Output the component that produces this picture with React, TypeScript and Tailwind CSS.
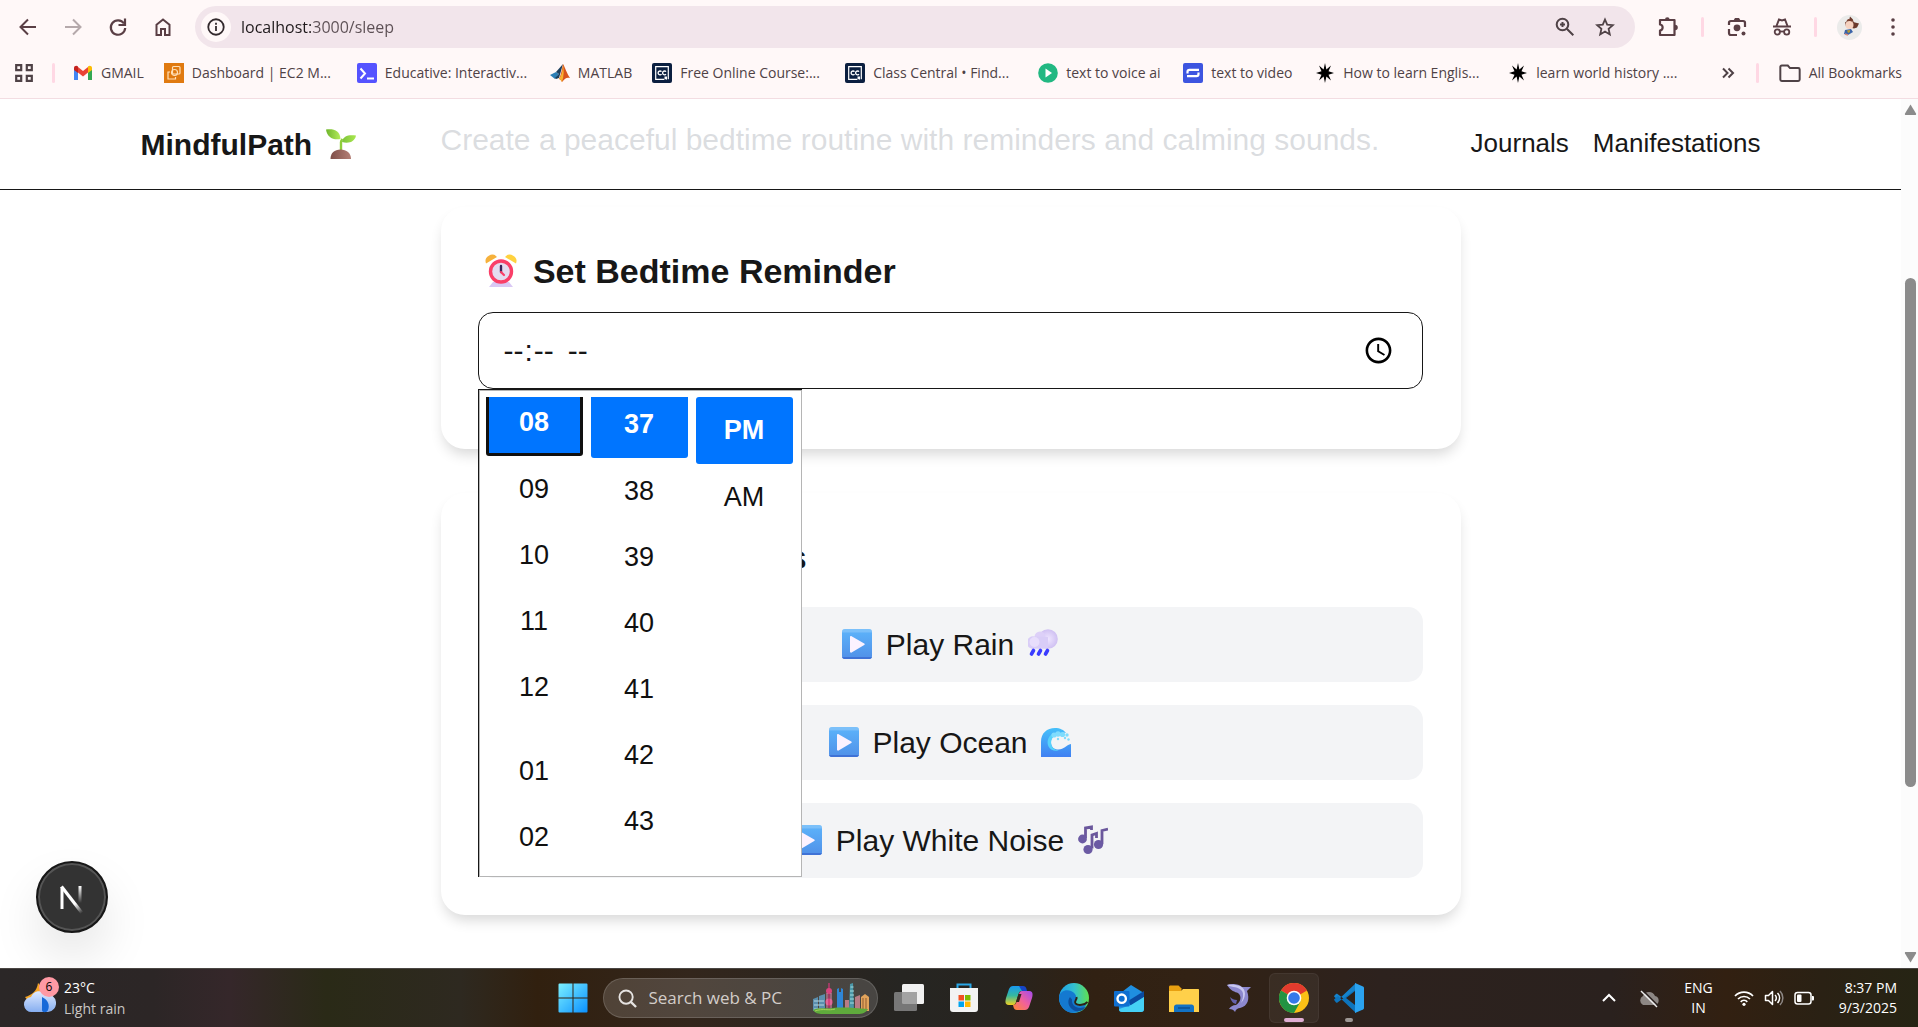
import type { ReactNode } from "react";

const ui = "font-['Open_Sans','Noto_Sans',sans-serif]";

function Svg({ size = 20, box = 20, className, children }: { size?: number; box?: number; className?: string; children: ReactNode }) {
  return (
    <svg
      width={size}
      height={size}
      viewBox={`0 0 ${box} ${box}`}
      fill="none"
      className={className}
      aria-hidden="true"
    >
      {children}
    </svg>
  );
}

/* ---------- emoji ---------- */

function Emoji({ children }: { children: ReactNode }) {
  return (
    <span className="inline-flex w-[41px] justify-center align-[-4px]">
      <Svg size={30} box={30}>{children}</Svg>
    </span>
  );
}

const Sprout = () => (
  <Emoji>
    <path d="M15 22V13c0-1 .5-2 1.500-3" stroke="#8fce3a" strokeWidth="2.400" />
    <path d="M0 0.500c8-1 14 1 14.500 9.500C7 11.500 1 8 0 0.500z" fill="url(#leafA)" />
    <path d="M30 6.500c-7-1-13 0-14 6.500 7 2 13-0.500 14-6.500z" fill="url(#leafB)" />
    <path d="M4.500 30c0-6 4-9.500 10-9.500S25 24 25 30z" fill="url(#soil)" />
    <defs>
      <linearGradient id="leafA"><stop stopColor="#6fb52c" /><stop offset="1" stopColor="#b4ec5a" /></linearGradient>
      <linearGradient id="leafB"><stop stopColor="#7dc23a" /><stop offset="1" stopColor="#a9e84e" /></linearGradient>
      <linearGradient id="soil"><stop stopColor="#7f4f49" /><stop offset="1" stopColor="#b47f76" /></linearGradient>
    </defs>
  </Emoji>
);

const AlarmClock = () => (
  <span className="inline-flex w-[46px] justify-center align-[-4px]">
    <Svg size={34} box={34}>
      <path d="M5 34l4-5h16l4 5z" fill="#d9c8f4" />
      <path d="M2 10.500a6.500 6.500 0 0 1 11-6.500z" fill="#f6b13c" />
      <path d="M32 10.500a6.500 6.500 0 0 0-11-6.500z" fill="#ffd23f" />
      <circle cx="17" cy="18.500" r="10.500" fill="#e4dcf0" stroke="#fa3f68" strokeWidth="3.400" />
      <path d="M17 13v6" stroke="#36245a" strokeWidth="2.400" strokeLinecap="round" />
      <path d="M17 19l3 3" stroke="#fa3f68" strokeWidth="2.200" strokeLinecap="round" />
    </Svg>
  </span>
);

const PlayBox = () => (
  <Emoji>
    <rect width="30" height="30" rx="3" fill="url(#playbox)" />
    <path d="M0 3a3 3 0 0 1 3-3h24a3 3 0 0 1 3 3v.5H0z" fill="#a9d4fb" opacity=".4" />
    <path d="M0 28h30a3 3 0 0 1-3 2H3a3 3 0 0 1-3-2z" fill="#3f72d6" />
    <path d="M8 8.200c0-1 .8-1.400 1.600-.9l12.600 7.200c.7.4.7 1.100 0 1.500L9.600 23.600c-.8.5-1.600 0-1.600-1z" fill="#fcf2ff" />
    <defs>
      <linearGradient id="playbox" x1="0" y1="0" x2="0" y2="1">
        <stop stopColor="#5db4fb" /><stop offset="1" stopColor="#5090e8" />
      </linearGradient>
    </defs>
  </Emoji>
);

const RainCloud = () => (
  <Emoji>
    <circle cx="20" cy="10" r="9.800" fill="url(#cloud)" />
    <circle cx="12" cy="8" r="5.500" fill="#ddd0f8" />
    <path d="M6.500 7.500a6.300 6.300 0 1 0 0 12.300H20V8z" fill="#d9cdf7" />
    <circle cx="6.500" cy="13" r="5" fill="#ebe2fc" opacity=".8" />
    <path d="M5.500 21.500l-2 3.500M12.500 21.500l-2 3.500M19.500 21.500l-2 3.500" stroke="#3a3cff" strokeWidth="3.600" strokeLinecap="round" />
    <defs>
      <radialGradient id="cloud"><stop stopColor="#efe6ff" /><stop offset="1" stopColor="#cfc0f2" /></radialGradient>
    </defs>
  </Emoji>
);

const Wave = () => (
  <Emoji>
    <path d="M0 30V15C0 6 6 1 14 1c5 0 9 2 11 5-9-1-15 3-15 9 0 5 3 7.500 7.500 7.500C23 22.500 25 18 30 17v13z" fill="url(#wave)" />
    <path d="M11 7c-4 3-5.500 8-3.500 12.500 2 4 6.500 5 10.500 4-8-.5-10.500-9-5-14.500z" fill="#56d2fb" />
    <g fill="#7fdcfd">
      <circle cx="13" cy="8" r="2.600" /><circle cx="17" cy="7" r="2.800" /><circle cx="21.500" cy="7.500" r="2.600" />
      <circle cx="26" cy="8" r="1.700" /><circle cx="17" cy="12" r="1.200" /><circle cx="24" cy="11" r="1.200" />
      <circle cx="27.500" cy="12.500" r="1.200" />
    </g>
    <defs>
      <linearGradient id="wave" x1="0" y1="0" x2="0" y2="1">
        <stop stopColor="#45c0fa" /><stop offset="1" stopColor="#4080f2" />
      </linearGradient>
    </defs>
  </Emoji>
);

const Notes = () => (
  <Emoji>
    <path d="M7.500 13V3l6-1V5" stroke="#6a579c" strokeWidth="2.800" />
    <path d="M14 23.500V10l4.500-1.500V13" stroke="#6a579c" strokeWidth="2.800" />
    <path d="M24 19V5.500l6-1.500" stroke="#6a579c" strokeWidth="2.800" />
    <circle cx="4.500" cy="14" r="4.400" fill="#6b5aa3" />
    <circle cx="10" cy="24.500" r="4.600" fill="#6b5aa3" />
    <circle cx="20.500" cy="19.500" r="4.600" fill="#6b5aa3" />
  </Emoji>
);

/* ---------- bookmark icons ---------- */

const Gmail = () => (
  <Svg>
    <path d="M1 5v12h4V9z" fill="#4285f4" />
    <path d="M19 5v12h-4V9z" fill="#34a853" />
    <path d="M1 5c0-2 2.500-3 4-1.500V10L1 7z" fill="#c5221f" />
    <path d="M19 5c0-2-2.500-3-4-1.500V10l4-3z" fill="#fbbc04" />
    <path d="M5 4l5 4 5-4v5.500l-5 4-5-4z" fill="#ea4335" />
  </Svg>
);

const Ec2 = () => (
  <Svg>
    <rect width="20" height="20" fill="#e07a10" />
    <rect x="8.500" y="3.500" width="7.500" height="7.500" rx="1" stroke="#ffe0b8" strokeWidth="1.200" />
    <circle cx="10.500" cy="9.500" r="3" stroke="#ffe0b8" strokeWidth="1.200" />
    <path d="M6 9H4v7h7.500v-2" stroke="#ffe0b8" strokeWidth="1.200" />
  </Svg>
);

const Educative = () => (
  <Svg>
    <rect width="20" height="20" rx="2" fill="#5553ff" />
    <path d="M3.500 5.500L8 10.500l-4.500 5M10 15.500h7" stroke="#fff" strokeWidth="2" />
  </Svg>
);

const Matlab = () => (
  <Svg>
    <path d="M0 12l6-3 3 2-4 5z" fill="#2d7fb5" />
    <path d="M6 9l7-8-4 14-3 1-1-1 4-4z" fill="#1c3f5e" />
    <path d="M13 1c2 3 4 10 7 14-3-1-5 0-8 4-1-2-2-3-3-3 2-4 3-10 4-15z" fill="#d9541e" />
    <path d="M13 1c0 5-1 11-4 15 1 0 2 1 3 3 2-6 2-12 1-18z" fill="#f8b133" />
  </Svg>
);

const ClassCentral = () => (
  <Svg>
    <rect width="20" height="20" rx="2" fill="#0b1f40" />
    <path d="M12 16.300H3.700V3.700h12.600v12.600" stroke="#fff" strokeWidth="1.200" />
    <path d="M9.500 8.700a1.900 1.900 0 1 0 0 2.400M14 8.700a1.900 1.900 0 1 0 0 2.400" stroke="#fff" strokeWidth="1.300" />
    <path d="M12.500 13.500h2.500V17l-1.200-1-1.300 1z" fill="#fff" />
  </Svg>
);

const Voice = () => (
  <Svg>
    <circle cx="10" cy="10" r="9.800" fill="#22b882" />
    <path d="M7.500 5.500l6.500 4.500-6.500 4.500z" fill="#fff" />
  </Svg>
);

const Video = () => (
  <Svg>
    <rect width="20" height="20" rx="2" fill="#3d55e0" />
    <path d="M4.500 10.500V9c0-1.500.8-2.200 2-2.200h9.500M15.500 9.500V11c0 1.500-.8 2.200-2 2.200H4" stroke="#fff" strokeWidth="2.200" />
  </Svg>
);

const Burst = () => (
  <Svg>
    <path
      d="M10 0l1.400 6.500L16 2.500l-2.500 5.800L19 10l-5.500 1.700 2.500 5.800-4.600-4L10 20l-1.400-6.500-4.600 4 2.500-5.800L1 10l5.500-1.700L4 2.500l4.600 4z"
      fill="#000"
    />
  </Svg>
);

const bookmarks = [
  { label: "GMAIL", icon: <Gmail />, width: "" },
  { label: "Dashboard | EC2 M...", icon: <Ec2 />, width: "w-[145px]" },
  { label: "Educative: Interactiv...", icon: <Educative />, width: "w-[145px]" },
  { label: "MATLAB", icon: <Matlab />, width: "" },
  { label: "Free Online Course:...", icon: <ClassCentral />, width: "w-[145px]" },
  { label: "Class Central • Find...", icon: <ClassCentral />, width: "w-[145px]" },
  { label: "text to voice ai", icon: <Voice />, width: "w-[97px]" },
  { label: "text to video", icon: <Video />, width: "w-[84px]" },
  { label: "How to learn Englis...", icon: <Burst />, width: "w-[145px]" },
  { label: "learn world history ....", icon: <Burst />, width: "w-[145px]" },
];

function IconButton({ label, className = "w-[45px]", children }: { label: string; className?: string; children: ReactNode }) {
  return (
    <button type="button" aria-label={label} className={`flex shrink-0 items-center justify-center ${className}`}>
      {children}
    </button>
  );
}

const Divider = () => <span className="h-5 w-[3px] shrink-0 rounded-full bg-[#ffd8e4]" />;

function BrowserBar() {
  return (
    <header className={`shrink-0 border-b border-[#f3dde2] bg-[#fff8f8] text-[#5a3f45] ${ui}`}>
      <div className="flex h-[54px] items-center pr-1 pl-[5px]">
        <IconButton label="Back">
          <Svg><path d="M18 10H3M10 2.500L2.500 10l7.500 7.500" stroke="currentColor" strokeWidth="2" /></Svg>
        </IconButton>
        <IconButton label="Forward">
          <Svg><path d="M2 10h15M10 2.500l7.500 7.500-7.500 7.500" stroke="#b5a9ab" strokeWidth="2" /></Svg>
        </IconButton>
        <IconButton label="Reload">
          <Svg>
            <path d="M16 6.500A7.200 7.200 0 1 0 17.200 11" stroke="currentColor" strokeWidth="2.200" />
            <path d="M17 1.500V8h-6.500" stroke="currentColor" strokeWidth="2.200" />
          </Svg>
        </IconButton>
        <IconButton label="Home">
          <Svg>
            <path d="M3.500 7.700L10 2.500l6.500 5.200V18H12v-6H8v6H3.500z" stroke="currentColor" strokeWidth="2" />
          </Svg>
        </IconButton>
        <div className="ml-2.5 flex h-[42px] flex-1 items-center rounded-full bg-[#f2e5eb] pr-5 pl-1.5">
          <button type="button" aria-label="Site information" className="flex size-[30px] items-center justify-center rounded-full bg-[#fff8f8]">
            <Svg size={18}>
              <circle cx="10" cy="10" r="8.600" stroke="#332a2d" strokeWidth="2" />
              <path d="M10 9v5.500M10 5.300v2.200" stroke="#332a2d" strokeWidth="2" />
            </Svg>
          </button>
          <input
            type="text"
            aria-label="Address"
            defaultValue="localhost:3000/sleep"
            className="ml-2.5 min-w-0 flex-1 bg-[linear-gradient(90deg,#1f1a1c_72px,#5c4f54_72px)] bg-clip-text text-base text-transparent outline-none"
          />
          <button type="button" aria-label="Zoom" className="mr-5">
            <Svg>
              <circle cx="7.500" cy="7.500" r="5.800" stroke="#4f4246" strokeWidth="2" />
              <path d="M11.800 11.800l6.500 6.500M7.500 5v5M5 7.500h5" stroke="#4f4246" strokeWidth="2" />
            </Svg>
          </button>
          <button type="button" aria-label="Bookmark this page">
            <Svg>
              <path d="M10 2.500l2.200 5.200 5.600.5-4.200 3.700 1.200 5.500L10 14.500l-4.800 2.900 1.200-5.500-4.200-3.700 5.600-.5z" stroke="#4f4246" strokeWidth="1.800" />
            </Svg>
          </button>
        </div>
        <IconButton label="Extensions" className="w-[66px]">
          <Svg size={22} box={22}>
            <path d="M3 4h14.500v15H3v-4.500c3.500-.5 3.500-5.500 0-6z" stroke="currentColor" strokeWidth="2.200" strokeLinejoin="round" />
            <path d="M8 3.500a2.300 2.300 0 0 1 4.600 0zM18 8.700a2.800 2.800 0 0 1 0 5.600z" fill="currentColor" />
          </Svg>
        </IconButton>
        <Divider />
        <IconButton label="Search with Lens" className="w-[66px]">
          <Svg>
            <path d="M2 8V5.500C2 4.500 3 4 4 4h12c1 0 2 .5 2 1.500V10M2 12v4c0 1 1 2 2 2h6" stroke="currentColor" strokeWidth="2.200" />
            <path d="M6.500 3.500L8 1h4l1.500 2.500z" fill="currentColor" />
            <circle cx="10" cy="10.800" r="3.400" fill="currentColor" />
            <circle cx="16.500" cy="16.500" r="2" fill="currentColor" />
          </Svg>
        </IconButton>
        <IconButton label="Incognito" className="w-6">
          <Svg>
            <path d="M1 9.500h18" stroke="currentColor" strokeWidth="2" />
            <path d="M4.500 9L7 2.500l3 1 3-1L15.500 9" stroke="currentColor" strokeWidth="2" />
            <circle cx="5.300" cy="15" r="2.600" stroke="currentColor" strokeWidth="1.800" />
            <circle cx="14.700" cy="15" r="2.600" stroke="currentColor" strokeWidth="1.800" />
            <path d="M8 14.500h4" stroke="currentColor" strokeWidth="1.800" />
          </Svg>
        </IconButton>
        <span className="w-5" />
        <Divider />
        <IconButton label="Profile" className="w-16">
          <Svg size={25} box={25}>
            <circle cx="12.500" cy="12.500" r="12.500" fill="#ebebea" />
            <path d="M13 1.500l3 3-1 2 3 1 4 1-2 4-3 1-8-2-1-4 4-2z" fill="#6b3a2c" />
            <circle cx="12.500" cy="10" r="4" fill="#f6d2c0" />
            <path d="M8 8c2-3 7-3 9 0l-1-3-5-1z" fill="#7a3f2e" />
            <path d="M8 15l6-1 2 3-5 3-4-1z" fill="#3a64a8" />
            <path d="M10 15.500l3-.5 0 2-2 1z" fill="#b99b2e" />
            <path d="M8 19l3 1" stroke="#d98b7a" strokeWidth="1.500" />
          </Svg>
        </IconButton>
        <IconButton label="Menu" className="w-6">
          <Svg>
            <circle cx="10" cy="3" r="1.800" fill="currentColor" />
            <circle cx="10" cy="10" r="1.800" fill="currentColor" />
            <circle cx="10" cy="17" r="1.800" fill="currentColor" />
          </Svg>
        </IconButton>
        <span className="w-[9px]" />
      </div>

      <nav className="flex h-11 items-center pb-1.5 pl-3.5 text-sm text-[#4f4246]">
        <button type="button" aria-label="Apps">
          <Svg>
            <path d="M2.200 2.200h5v5h-5zM12.800 2.200h5v5h-5zM2.200 12.800h5v5h-5zM12.800 12.800h5v5h-5z" stroke="currentColor" strokeWidth="2.200" />
          </Svg>
        </button>
        <span className="w-[18px]" />
        <Divider />
        <div className="ml-[18px] flex flex-1 gap-5 whitespace-nowrap">
          {bookmarks.map((b) => (
            <a key={b.label} href="#" className="flex items-center gap-2">
              {b.icon}
              <span className={b.width}>{b.label}</span>
            </a>
          ))}
        </div>
        <IconButton label="More bookmarks" className="w-14">
          <Svg size={16} box={16}><path d="M3 3.500L7.500 8 3 12.500M8.500 3.500L13 8l-4.500 4.500" stroke="currentColor" strokeWidth="2" /></Svg>
        </IconButton>
        <Divider />
        <a href="#" className="mr-4 ml-5 flex items-center gap-2 whitespace-nowrap">
          <Svg size={22}>
            <path d="M1.200 16V4.500c0-.8.5-1.300 1.300-1.300H8l2 2.300h7.500c.8 0 1.300.5 1.300 1.300V16c0 .8-.5 1.300-1.300 1.300h-15c-.8 0-1.300-.5-1.300-1.300z" stroke="currentColor" strokeWidth="1.800" />
          </Svg>
          All Bookmarks
        </a>
      </nav>
    </header>
  );
}

/* ---------- page ---------- */

function SiteHeader() {
  return (
    <header className="absolute inset-x-0 top-0 border-b border-[#171717] bg-white/80">
      <div className="mx-auto flex h-[90px] max-w-[1620px] items-center justify-between">
        <a href="#" className="text-3xl leading-[45px] font-bold">
          MindfulPath <Sprout />
        </a>
        <nav className="flex gap-6 pb-0.5 text-[26px] leading-10">
          <a href="#">Journals</a>
          <a href="#">Manifestations</a>
        </nav>
      </div>
    </header>
  );
}

const hours = ["08", "09", "10", "11", "12", "01", "02"];
const minutes = ["37", "38", "39", "40", "41", "42", "43"];
const periods = ["PM", "AM"];

const cell = "flex w-full shrink-0 items-center justify-center rounded-[3px]";

function PickerColumn({ label, values, first, gapBefore }: { label: string; values: string[]; first: string; gapBefore?: string }) {
  return (
    <div role="listbox" aria-label={label} className="flex flex-1 flex-col overflow-hidden">
      {values.map((v, i) => (
        <button
          key={v}
          type="button"
          role="option"
          aria-selected={i === 0}
          className={`${cell} ${i === 0 ? `h-[67px] bg-[#0075ff] font-bold text-white ${first}` : "h-[66px]"} ${v === gapBefore ? "mt-[18px]" : ""}`}
        >
          {v}
        </button>
      ))}
    </div>
  );
}

function TimePicker() {
  return (
    <div className="absolute top-full left-0 z-10 h-[488px] w-[324px] border-t border-l border-[#171717] bg-white">
      <div className="flex h-full gap-2 border border-[#b5b5b5] py-1.5 pr-2 pl-1.5 text-[27px] text-[#101010]">
        <PickerColumn label="Hours" values={hours} gapBefore="01" first="-mt-2 border-[3px] border-[#101010]" />
        <PickerColumn label="Minutes" values={minutes} first="-mt-1.5" />
        <PickerColumn label="AM or PM" values={periods} first="" />
      </div>
    </div>
  );
}

const sounds = [
  { name: "Play Rain", emoji: <RainCloud /> },
  { name: "Play Ocean", emoji: <Wave /> },
  { name: "Play White Noise", emoji: <Notes /> },
];

const card = "rounded-3xl bg-white pt-[37px] pr-[38px] pl-[37px] shadow-[0_8px_14px_-3px_rgba(0,0,0,0.16)]";

function SleepPage() {
  return (
    <main className="relative flex-1 overflow-hidden bg-white font-['Liberation_Sans',Arial,sans-serif] text-[#171717]">
      <div className="mx-auto max-w-[1020px] pt-[18px]">
        <p className="mb-[45px] text-3xl leading-[45px] text-gray-600">
          Create a peaceful bedtime routine with reminders and calming sounds.
        </p>

        <section className={`${card} pb-[60px]`}>
          <label htmlFor="bedtime" className="mb-3.5 block h-[54px] text-[34px] leading-[54px] font-bold">
            <AlarmClock /> Set Bedtime Reminder
          </label>
          <div className="relative">
            <input
              id="bedtime"
              type="time"
              className="block h-[77px] w-full rounded-[15px] border border-[#171717] px-6 text-3xl outline-none [&::-webkit-datetime-edit-ampm-field]:ml-1.5"
            />
            <TimePicker />
          </div>
        </section>

        <section className={`${card} mt-11 pb-[37px]`}>
          <h2 className="mb-[23px] h-[54px] text-[34px] leading-[54px] font-bold">
            <span className="inline-block w-11" /> Relaxing Sounds
          </h2>
          <div className="flex flex-col gap-[23px]">
            {sounds.map((s) => (
              <button key={s.name} type="button" className="h-[75px] rounded-[15px] bg-gray-100 text-3xl">
                <PlayBox /> {s.name} {s.emoji}
              </button>
            ))}
          </div>
        </section>
      </div>

      <SiteHeader />

      <button
        type="button"
        aria-label="Open dev tools"
        className="absolute bottom-[35px] left-9 flex size-[72px] items-center justify-center rounded-full border-2 border-[#171717] bg-[#333] shadow-[inset_0_0_0_2px_#555,0_24px_48px_rgba(0,0,0,0.1)]"
      >
        <Svg size={34} box={34}>
          <path d="M7 29V7" stroke="#fff" strokeWidth="3" />
          <path d="M6.500 6.500L27 33" stroke="url(#nDiag)" strokeWidth="3.200" />
          <path d="M25 6v17" stroke="url(#nStem)" strokeWidth="3" />
          <defs>
            <linearGradient id="nDiag" x1="15" y1="18" x2="27" y2="33" gradientUnits="userSpaceOnUse">
              <stop offset=".4" stopColor="#fff" /><stop offset="1" stopColor="#fff" stopOpacity="0" />
            </linearGradient>
            <linearGradient id="nStem" x1="25" y1="6" x2="25" y2="23" gradientUnits="userSpaceOnUse">
              <stop stopColor="#fff" /><stop offset="1" stopColor="#fff" stopOpacity="0" />
            </linearGradient>
          </defs>
        </Svg>
      </button>
    </main>
  );
}

function Scrollbar() {
  return (
    <div className="flex w-[17px] shrink-0 flex-col items-center bg-[#fcfcfc] py-1 pl-0.5">
      <Svg size={13} box={13}><path d="M6.500 1.500L12 10.500c.4.800 0 1.500-.8 1.500H1.800c-.8 0-1.200-.7-.8-1.500z" fill="#8b8b8b" /></Svg>
      <div className="flex-[162]" />
      <div className="w-[11px] flex-[509] rounded-full bg-[#8b8b8b]" />
      <div className="flex-[164]" />
      <Svg size={13} box={13}><path d="M6.500 11.500L12 2.500c.4-.8 0-1.500-.8-1.500H1.800C1 1 .6 1.700 1 2.500z" fill="#8b8b8b" /></Svg>
    </div>
  );
}

/* ---------- taskbar ---------- */

const Weather = () => (
  <Svg size={32} box={32}>
    <path d="M14 1c-1 8-6 12-13 14 3 6 14 7 18 0V6z" fill="#f5a524" />
    <path d="M8 30a7.500 7.500 0 0 1-1-15 9 9 0 0 1 15-3 9 9 0 0 1 2 18z" fill="url(#wx)" />
    <path d="M18 15c6 3 8 8 6 13-1 3-6 3-6 0z" fill="#1668d8" />
    <defs>
      <linearGradient id="wx" x1="0" y1="0" x2="0" y2="1"><stop stopColor="#dfeaff" /><stop offset="1" stopColor="#86aef0" /></linearGradient>
    </defs>
  </Svg>
);

const Windows = () => (
  <Svg size={30} box={30}>
    <path d="M.5 1.500A1 1 0 0 1 1.500.5H14.500v14H.5zM15.500.5h13a1 1 0 0 1 1 1v13h-14zM.5 15.500h14v14h-13a1 1 0 0 1-1-1zM15.500 15.500h14v13a1 1 0 0 1-1 1h-13z" fill="url(#win)" />
    <defs>
      <linearGradient id="win" x1="0" y1="0" x2="1" y2="1"><stop stopColor="#7cf0ff" /><stop offset="1" stopColor="#0a90ff" /></linearGradient>
    </defs>
  </Svg>
);

const City = () => (
  <svg width="58" height="34" viewBox="0 0 58 34" fill="none" aria-hidden="true">
    <path d="M1 18l5-2v14H1zM7 15l6-2v17H7z" fill="#5b8fae" />
    <path d="M2 20h10M2 24h10M2 28h10" stroke="#b7d6df" />
    <path d="M17 2v28" stroke="#b23a6c" strokeWidth="1.600" />
    <circle cx="17" cy="10" r="3" fill="#d8447e" />
    <circle cx="17" cy="21" r="3.600" fill="#d8447e" />
    <path d="M15 12v18M19 12v18" stroke="#e58cb0" />
    <path d="M25 8l2-1v4h2V7l2 1v22h-6z" fill="#2f86d6" />
    <path d="M38 3l3-1 1 28h-5z" fill="#4b97a8" />
    <path d="M38.500 6h3M38 10h4M38 14h4M38 18h4M38 22h4" stroke="#a5dbe0" />
    <path d="M33 19h4v11h-4zM43 16l5-2v16h-5z" fill="#b97c86" />
    <path d="M49 16l4-3 4 3v14h-8z" fill="#e2a45c" />
    <path d="M51 17v12M54 17v12" stroke="#8f5a2e" />
    <path d="M1 29c6-3 14-1 20-2 10-1 22 0 35 1-2 4-6 5-10 5H11c-5 0-8-1-10-4z" fill="#5faa3c" />
    <path d="M3 30c8-3 14 0 20-2" stroke="#a6d05a" />
  </svg>
);

const TaskView = () => (
  <Svg size={30} box={30}>
    <rect x="8" y="1" width="22" height="20" rx="1.500" fill="#f1f1f1" />
    <rect x="0" y="9" width="23" height="19" rx="1.500" fill="#777" />
    <path d="M8 9h15v12H9.500A1.500 1.500 0 0 1 8 19.500z" fill="#a3a3a3" />
  </Svg>
);

const Store = () => (
  <Svg size={30} box={30}>
    <path d="M8.500 6V1.500h13V6" stroke="#2aa8e8" strokeWidth="2" />
    <path d="M1 5h28v21a3 3 0 0 1-3 3H4a3 3 0 0 1-3-3z" fill="#f3f3f3" />
    <path d="M9.500 12H15v5.500H9.500z" fill="#f25022" />
    <path d="M16 12h5.500v5.500H16z" fill="#7fba00" />
    <path d="M9.500 18.500H15V24H9.500z" fill="#00a4ef" />
    <path d="M16 18.500h5.500V24H16z" fill="#ffb900" />
  </Svg>
);

const Copilot = () => (
  <Svg size={30} box={30}>
    <path d="M9 3h8c2 0 3 1 3.500 3L21 8h-3c-2 0-3 1-3.500 3L12 19c-1 3-2 3-4 3H5c-4 0-4-3-3-7l3-9c1-2 2-3 4-3z" fill="url(#cpA)" />
    <path d="M21 27h-8c-2 0-3-1-3.500-3L9 22c2 0 3-1 3.500-3L15 11c1-3 2-3 4-3h6c4 0 4 3 3 7l-3 9c-1 2-2 3-4 3z" fill="url(#cpB)" />
    <path d="M15 3h4c2 0 3 1 3.500 3l.5 2h-5z" fill="#1646c8" />
    <path d="M14.500 11h3l-2.500 8h-3z" fill="#33241c" />
    <defs>
      <linearGradient id="cpA" x1="0" y1="0" x2="0" y2="1"><stop stopColor="#1899f0" /><stop offset=".5" stopColor="#35b8a0" /><stop offset="1" stopColor="#f0d020" /></linearGradient>
      <linearGradient id="cpB" x1="1" y1="0" x2="0" y2="1"><stop stopColor="#a34af0" /><stop offset=".5" stopColor="#f0609c" /><stop offset="1" stopColor="#ff8a30" /></linearGradient>
    </defs>
  </Svg>
);

const Edge = () => (
  <Svg size={30} box={30}>
    <circle cx="15" cy="15" r="15" fill="url(#edgeA)" />
    <path d="M0 14c1-6 7-8 12-6 4 1.500 6 5 5 8-1 2-3 3-1 5 3 3 9 2 12-1-3 7-10 11-17 9.500C5 28 0 22 0 14z" fill="#1479d0" />
    <path d="M11 14c-3 4-2 10 4 13.500 4 2 10 0 12-4-8 4-15-1-14-7z" fill="#0d4f9e" />
    <path d="M17.500 14c1 3-3 4-1 6.500 3 2.500 9 1.500 12-1.500" stroke="#2e2117" strokeWidth="2" />
    <defs>
      <linearGradient id="edgeA"><stop stopColor="#1ea0e8" /><stop offset=".5" stopColor="#33c0d0" /><stop offset="1" stopColor="#5fe050" /></linearGradient>
    </defs>
  </Svg>
);

const Outlook = () => (
  <Svg size={30} box={30}>
    <path d="M4 12L17 2l13 8v16a3 3 0 0 1-3 3H8a3 3 0 0 1-3-3z" fill="#1f8fe0" />
    <path d="M14 18L30 8v6L17 23z" fill="#0a4aa0" />
    <path d="M17 22l13-8v12a3 3 0 0 1-3 3H8c-2 0-3-1-3-3z" fill="#45d0f5" />
    <rect y="8" width="15.500" height="15.500" rx="1" fill="#0f6fd0" />
    <circle cx="7.700" cy="15.700" r="4.200" stroke="#fff" strokeWidth="2.400" />
  </Svg>
);

const Folder = () => (
  <Svg size={30} box={30}>
    <path d="M0 4c0-1 .5-1.500 1.500-1.500h8l3 3V10H0z" fill="#e8a010" />
    <path d="M0 8h12l2-2h15c.7 0 1 .4 1 1v22H0z" fill="#ffd04a" />
    <path d="M5 29v-5c0-1.500 1-2.500 2.500-2.500h15c1.500 0 2.500 1 2.500 2.500v5z" fill="#1272c4" />
    <path d="M9 25h12" stroke="#0b4f92" strokeWidth="1.500" />
  </Svg>
);

const Dolphin = () => (
  <Svg size={30} box={30}>
    <path d="M3 2c6-2 12-1 15 2l9 0-4 4c3 8 1 15-7 17-2 0-4 1-5 4-1-2-3-3-6-3 1-2 4-4 7-4 5-3 6-9 2-12-3-1-7-2-11-8z" fill="#8d89cf" />
    <path d="M3 2c6 3 11 1 15 6 2 3 1 8-1 12 5-5 6-14-1-17-4-1-8-2-13-1z" fill="#c9c8f0" />
    <path d="M6 14c1 3 2 6 6 7l1-4c-3 0-5-1-7-3z" fill="#6562ac" />
  </Svg>
);

const Chrome = () => (
  <Svg size={30} box={30}>
    <circle cx="15" cy="15" r="15" fill="#fbc116" />
    <path d="M15 15L2 7.500A15 15 0 0 1 28 7.500z" fill="#e33b2e" />
    <path d="M2 7.500A15 15 0 0 0 15 30l6.500-11.500L15 15z" fill="#229342" />
    <circle cx="15" cy="15" r="7.300" fill="#fff" />
    <circle cx="15" cy="15" r="5.800" fill="#3579ea" />
  </Svg>
);

const VsCode = () => (
  <Svg size={30} box={30}>
    <path d="M22 0L4 17l-3.500-3c-.5-.4-.5-1 0-1.500L2 11c.5-.4 1-.4 1.500 0L22 25z" fill="#1583cc" />
    <path d="M22 30L4 13 .5 16c-.5.400-.5 1 0 1.500L2 19.500c.5.400 1 .4 1.500 0L22 6z" fill="#0d74bd" />
    <path d="M21 8v14l-9-7z" fill="#2c211b" />
    <path d="M21 0l8 3.500c.6.300 1 .8 1 1.500v20c0 .7-.4 1.200-1 1.500L21 30z" fill="#2ba3f0" />
  </Svg>
);

const apps = [
  { name: "Task view", icon: <TaskView />, tile: "border-transparent", mark: "" },
  { name: "Microsoft Store", icon: <Store />, tile: "border-transparent", mark: "" },
  { name: "Copilot", icon: <Copilot />, tile: "border-transparent", mark: "" },
  { name: "Edge", icon: <Edge />, tile: "border-transparent", mark: "" },
  { name: "Outlook", icon: <Outlook />, tile: "border-transparent", mark: "" },
  { name: "File Explorer", icon: <Folder />, tile: "border-transparent", mark: "" },
  { name: "Dolphin", icon: <Dolphin />, tile: "border-transparent", mark: "" },
  { name: "Chrome", icon: <Chrome />, tile: "border-white/5 bg-white/5", mark: "w-5 bg-[#e0aed4]" },
  { name: "Visual Studio Code", icon: <VsCode />, tile: "border-transparent", mark: "w-2 bg-[#9d9794]" },
];

function Taskbar() {
  return (
    <footer
      className={`grid h-[59px] shrink-0 grid-cols-[1fr_auto_1fr] items-center border-t border-[#4a4643] bg-[linear-gradient(90deg,#2b2727_0%,#2c2626_8%,#35272a_12%,#2a2a17_17%,#2e2920_24%,#31200f_28%,#33261c_36%,#262522_47%,#27241f_52%,#312113_57%,#322214_62%,#2d221e_72%,#2a211e_84%,#322011_90%,#2a2114_95%,#262414_100%)] text-sm text-white ${ui}`}
    >
      <div className="relative flex items-center gap-2 pl-6">
        <Weather />
        <span className="absolute top-0 left-[39px] flex size-5 items-center justify-center rounded-full bg-[#ff99a4] text-xs text-black">6</span>
        <div className="leading-[21px]">
          <div>23°C</div>
          <div className="text-[#c9c6c4]">Light rain</div>
        </div>
      </div>

      <div className="flex items-center pl-4">
        <button type="button" aria-label="Start" className="flex w-[30px] justify-center"><Windows /></button>
        <label className="mr-1 ml-[15px] flex h-10 w-[275px] items-center rounded-full border border-white/15 bg-white/15 pr-[7px] pl-3.5">
          <Svg size={19} className="shrink-0">
            <circle cx="8.500" cy="8.500" r="7" stroke="#e6e3e1" strokeWidth="2" />
            <path d="M13.500 13.500l5.500 5.500" stroke="#e6e3e1" strokeWidth="2.400" />
          </Svg>
          <input
            type="search"
            placeholder="Search web & PC"
            aria-label="Search web & PC"
            className="ml-3 min-w-0 flex-1 bg-transparent text-[17px] outline-none placeholder:text-[#d3cdc9]"
          />
          <City />
        </label>
        {apps.map((a) => (
          <button key={a.name} type="button" aria-label={a.name} className="flex w-[55px] justify-center">
            <span className={`relative flex size-[50px] items-center justify-center rounded-md border ${a.tile}`}>
              {a.icon}
              {a.mark && <span className={`absolute bottom-0 h-1 rounded-full ${a.mark}`} />}
            </span>
          </button>
        ))}
      </div>

      <div className="flex items-center justify-end pr-[21px]">
        <Svg size={16} box={16}><path d="M2 11l6-6 6 6" stroke="#fff" strokeWidth="2" /></Svg>
        <Svg size={22} box={22} className="ml-[21px]">
          <path d="M5 18a5 5 0 0 1 0-9 6.500 6.500 0 0 1 12 0 4.600 4.600 0 0 1 0 9z" fill="#8d8784" />
          <path d="M4.500 3l16 16" stroke="#2a211e" strokeWidth="1.500" />
          <path d="M3 4l16 16" stroke="#eee" strokeWidth="1.500" />
        </Svg>
        <div className="ml-6 text-center leading-5">
          <div>ENG</div>
          <div>IN</div>
        </div>
        <Svg size={20} className="ml-[21px]">
          <path d="M1 8a12.500 12.500 0 0 1 18 0M4 11a8.500 8.500 0 0 1 12 0M6.700 13.800a4.700 4.700 0 0 1 6.600 0" stroke="#fff" strokeWidth="1.700" />
          <circle cx="10" cy="16.300" r="1.600" fill="#fff" />
        </Svg>
        <Svg size={20} className="ml-2.5">
          <path d="M1.500 7.500h3l4-4v13l-4-4h-3z" stroke="#fff" strokeWidth="1.500" strokeLinejoin="round" />
          <path d="M11 7a4 4 0 0 1 0 6M13.500 5a7 7 0 0 1 0 10" stroke="#fff" strokeWidth="1.500" />
          <path d="M16 3a10 10 0 0 1 0 14" stroke="#8d8784" strokeWidth="1.500" />
        </Svg>
        <Svg size={20} className="ml-2.5">
          <rect x="1" y="4.500" width="16" height="11.500" rx="2.500" stroke="#fff" strokeWidth="1.500" />
          <rect x="3" y="6.500" width="4.500" height="7.500" rx="1" fill="#fff" />
          <path d="M18 8h1a1 1 0 0 1 1 1v2.500a1 1 0 0 1-1 1h-1z" fill="#fff" />
        </Svg>
        <div className="ml-[25px] text-right leading-5">
          <div>8:37 PM</div>
          <div>9/3/2025</div>
        </div>
      </div>
    </footer>
  );
}

export default function App() {
  return (
    <div className="flex h-screen flex-col overflow-hidden">
      <BrowserBar />
      <div className="flex min-h-0 flex-1">
        <SleepPage />
        <Scrollbar />
      </div>
      <Taskbar />
    </div>
  );
}
